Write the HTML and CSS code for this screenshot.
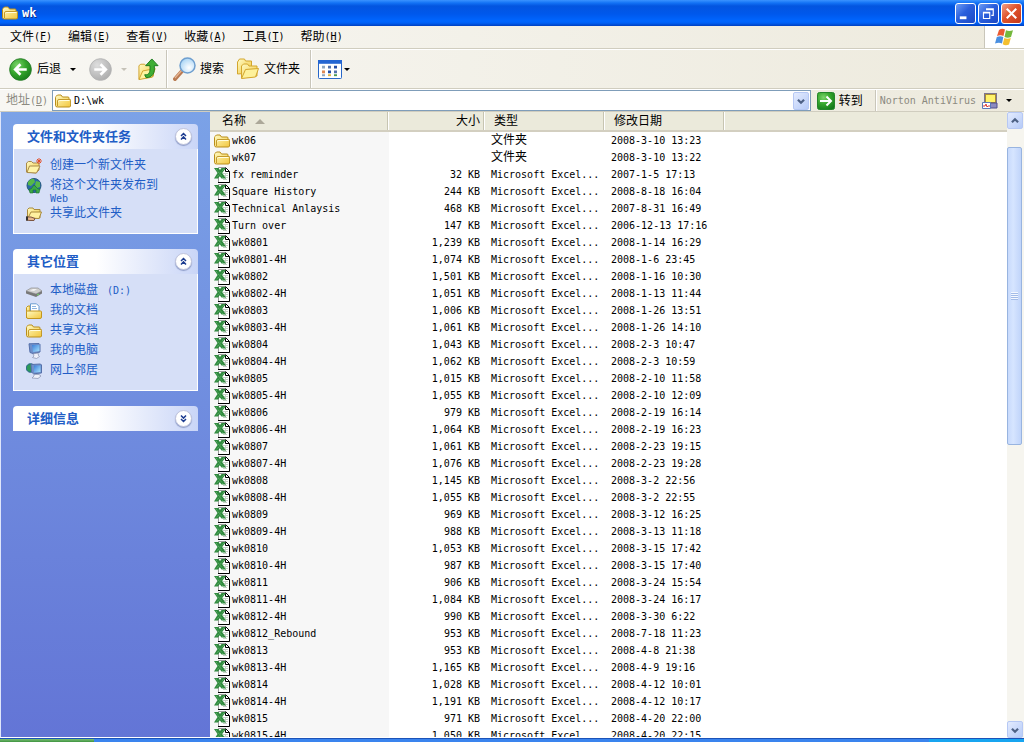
FILE: index.html
```html
<!DOCTYPE html>
<html lang="zh-CN">
<head>
<meta charset="utf-8">
<title>wk</title>
<link rel="stylesheet" href="styles.css">
</head>
<body>
<svg class="sprite" aria-hidden="true">
  <defs>
    <linearGradient id="gold" x1="0" y1="0" x2="1" y2="1"><stop offset="0" stop-color="#fffbc4"/><stop offset="1" stop-color="#f2c63c"/></linearGradient>
    <radialGradient id="green" cx=".35" cy=".3" r=".8"><stop offset="0" stop-color="#7bd46a"/><stop offset=".5" stop-color="#35a52c"/><stop offset="1" stop-color="#14791a"/></radialGradient>
    <radialGradient id="grey" cx=".35" cy=".3" r=".8"><stop offset="0" stop-color="#dedede"/><stop offset="1" stop-color="#a9a9a9"/></radialGradient>
    <radialGradient id="lens" cx=".6" cy=".65" r=".7"><stop offset="0" stop-color="#ffffff"/><stop offset="1" stop-color="#a5d3f5"/></radialGradient>
    <linearGradient id="screen" x1="0" y1="0" x2="1" y2="1"><stop offset="0" stop-color="#3c7fd8"/><stop offset="1" stop-color="#a8e4ff"/></linearGradient>
  </defs>
  <symbol id="folder" viewBox="0 0 16 16">
    <path d="M.5 12.500V4.500q0-1 1-1.500L2.500 2H6l1.500 2H13q1 0 1 1v1.500h1q.7 0 .7 1v4.500q0 2-1.500 2H2.500Q.5 14 .5 12.500z" fill="url(#gold)" stroke="#b98d1a"/>
    <path d="M2.500 13V8q0-1.500 1.500-1.500h11" fill="none" stroke="#c39a2c"/>
    <path d="M3.500 8.500q0-1 1-1h10" fill="none" stroke="#fffde0"/>
  </symbol>
  <symbol id="excel" viewBox="0 0 16 16">
    <path d="M4.500 .5h7l4 4v11h-11z" fill="#fff" stroke="#9b9b9b"/>
    <path d="M11.500 .5l4 4v11H4" fill="none" stroke="#000"/>
    <path d="M11.500 1v3.500H15" fill="none" stroke="#000"/>
    <path d="M9 6.500h5M9 8.500h5M9 10.500h5M9 12.500h4M11.500 6v7" stroke="#c3cfc4"/>
    <path d="M0 1h4.500l1.500 2L7.500 1H12L8.200 6l3.800 5.500H7.500L5.800 9.200 4 11.500H0l3.500-5.400z" fill="#2f8a3d"/>
    <path d="M2 2l7 9M10 2L2 11" stroke="#6fb678" stroke-dasharray="1 1" fill="none"/>
  </symbol>
</svg>

<header class="titlebar">
  <svg class="i16"><use href="#folder"/></svg>
  <h1>wk</h1>
  <div class="winbtns">
    <button aria-label="最小化"><svg viewBox="0 0 20 20"><path d="M4 13h7v3H4z" fill="#fff"/></svg></button>
    <button aria-label="还原"><svg viewBox="0 0 20 20"><path d="M8 6.500V5h7v7h-2M8 6h7" fill="none" stroke="#fff" stroke-width="1.200"/><path d="M4.700 8.700h6.600v6.600H4.700z M4.700 9.500h6.600" fill="none" stroke="#fff" stroke-width="1.200"/></svg></button>
    <button class="close" aria-label="关闭"><svg viewBox="0 0 20 20"><path d="M5 5l10 10M15 5L5 15" stroke="#fff" stroke-width="2.200"/></svg></button>
  </div>
</header>

<nav class="menubar">
  <button>文件<span class="l">(<u>F</u>)</span></button>
  <button>编辑<span class="l">(<u>E</u>)</span></button>
  <button>查看<span class="l">(<u>V</u>)</span></button>
  <button>收藏<span class="l">(<u>A</u>)</span></button>
  <button>工具<span class="l">(<u>T</u>)</span></button>
  <button>帮助<span class="l">(<u>H</u>)</span></button>
  <div class="flag">
    <svg viewBox="0 0 20 18"><path d="M4 2q3-2 6-.5L8.500 8Q5.500 6.500 2 8z" fill="#ea5a32"/><path d="M11 2.200q3 1.600 7 0L16 9q-3.500 1.500-6.500 0z" fill="#74b83c"/><path d="M1.800 9q3.500-1.500 6.500 0L7 15.500Q4 14 0 15.500z" fill="#4a8fe0"/><path d="M9.300 10q3 1.500 6.500 0L14 16.500q-3.500 1.500-6.300-.300z" fill="#f4bf2e"/></svg>
  </div>
</nav>

<div class="toolbar">
  <button class="back"><svg class="i23" viewBox="0 0 24 24"><circle cx="12" cy="12" r="11.300" fill="url(#green)" stroke="#2a7d2a"/><path d="M18.500 12H7M12 6.500L6.500 12l5.500 5.500" fill="none" stroke="#fff" stroke-width="2.800"/></svg>后退<i class="caret"></i></button>
  <button class="forward" aria-label="前进" disabled><svg class="i23" viewBox="0 0 24 24"><circle cx="12" cy="12" r="11.300" fill="url(#grey)" stroke="#b5b5b5"/><path d="M5.500 12H17M12 6.500l5.500 5.500-5.500 5.500" fill="none" stroke="#fff" stroke-width="2.800"/></svg><i class="caret dim"></i></button>
  <button class="up" aria-label="向上"><svg class="i23" viewBox="0 0 24 24"><path d="M2 8l2-1.500h4L9.500 8 17 7v12L2 22z" fill="url(#gold)" stroke="#d0a32e"/><path d="M2 22.500l4-9L19 11l-3 9z" fill="#fdf3a0" stroke="#d0a32e"/><path d="M8 17.500c5 .5 6-3 5.500-9.500H9l6.500-7L22 8h-4c1 8-2 12.500-8.500 12.500z" fill="#3fae35" stroke="#1d7a1e"/></svg></button>
  <span class="sep"></span>
  <button class="search"><svg class="i24" viewBox="0 0 24 24"><path d="M9.500 13.500L2 22" stroke="#b97a52" stroke-width="4" stroke-linecap="round"/><path d="M9 13L2 21" stroke="#e6b592" stroke-width="1.200"/><circle cx="14.500" cy="8.500" r="7.500" fill="url(#lens)" stroke="#6f9fcf" stroke-width="1.500"/></svg>搜索</button>
  <button class="folders"><svg class="i24" viewBox="0 0 24 24"><path d="M1.500 17V5l2-3h5l1 2h6v12z" fill="url(#gold)" stroke="#d3a62d"/><path d="M5.500 21V9l2-2h4l1.500 2H21v10z" fill="url(#gold)" stroke="#d3a62d"/><path d="M5.500 21.500l4-9 13-1-3 8.500z" fill="#fdf19b" stroke="#d3a62d"/></svg>文件夹</button>
  <span class="sep"></span>
  <button class="views" aria-label="查看方式"><svg class="i24" viewBox="0 0 24 20" preserveAspectRatio="none"><rect x=".5" y=".5" width="23" height="19" rx="1" fill="#fff" stroke="#2163c7"/><path d="M0 0h24v4H0z" fill="#2466d2"/><path d="M4 6h3v3H4zM4 15h3v2H4z" fill="#8fa7c0"/><path d="M4 11h3v3H4z" fill="#e08a55"/><path d="M10 6h3v3h-3zM16 11h3v3h-3z" fill="#5272ac"/><path d="M10 11h3v3h-3zM16 6h3v3h-3z" fill="#244da5"/><path d="M10 15h3v2h-3z" fill="#e0b33f"/><path d="M16 15h3v2h-3z" fill="#4c9a55"/></svg><i class="caret"></i></button>
</div>

<div class="addressbar">
  <label for="addr">地址<span class="l">(<u>D</u>)</span></label>
  <div class="combo">
    <svg class="i16"><use href="#folder"/></svg>
    <input id="addr" type="text" value="D:\wk">
    <button class="blue" aria-label="展开"><svg viewBox="0 0 16 16"><path d="M4.500 6.500L8 10l3.500-3.500" fill="none" stroke="#4d6185" stroke-width="2.500"/></svg></button>
  </div>
  <button class="go"><svg class="i18" viewBox="0 0 18 18"><rect x=".5" y=".5" width="17" height="17" rx="2" fill="url(#green)" stroke="#25862a"/><path d="M3 9h11M9.500 4.500L14 9l-4.500 4.500" fill="none" stroke="#fff" stroke-width="2"/></svg>转到</button>
  <span class="sep"></span>
  <button class="norton"><span class="l">Norton AntiVirus</span><svg class="i16" viewBox="0 0 16 16"><rect x="2.500" y=".5" width="12" height="10" fill="#a88b35" stroke="#7c7590"/><rect x="4" y="2" width="9" height="7" fill="#fff36b"/><path d="M8 10h7v5H8z" fill="#8b8bc0" stroke="#4e4e8c"/><path d="M.5 9.500h8v6h-8z" fill="#fff" stroke="#5b78b8"/><path d="M1 13h2l1-2 1 3 1-1h2" fill="none" stroke="#dc3c32"/></svg><i class="caret"></i></button>
</div>

<div class="content">
  <aside>
    <section>
      <h2>文件和文件夹任务<button aria-label="折叠"><svg viewBox="0 0 18 18"><path d="M6 8.500l3-3 3 3M6 12.500l3-3 3 3" fill="none" stroke="#1c3c90" stroke-width="1.800"/></svg></button></h2>
      <ul>
        <li><svg class="i16" viewBox="0 0 16 16"><path d="M.5 14V5l2-1.500h3L7 5h6v7l-3 3z" fill="url(#gold)" stroke="#a98a4a"/><path d="M1 14.500L3.500 8H14l-3.500 7z" fill="#fff4a8" stroke="#a98a4a"/><path d="M13 0v6M10 3h6M11 1l4 4M15 1l-4 4" stroke="#e3502a"/></svg><a href="#">创建一个新文件夹</a></li>
        <li><svg class="i16" viewBox="0 0 16 16"><circle cx="8" cy="7.500" r="7" fill="#2a69a8" stroke="#245a7c"/><path d="M2 4q3-4 6-3l1 3-4 4-3-1zM10 3l4 1v5l-3 1-2-3z" fill="#56b848"/><path d="M4 15l-1-4h2l3-4 4 4h2l-1 4h-3v-3H7v3z" fill="#3aa846" stroke="#19702a" stroke-width=".6"/></svg><a href="#">将这个文件夹发布到<span class="l second">Web</span></a></li>
        <li><svg class="i16" viewBox="0 0 16 16"><path d="M1.500 12V3.500L3 2h4l1 1.500h6V12z" fill="url(#gold)" stroke="#a88a3d"/><path d="M2 12l3-6h10.500L13 12.500z" fill="#fff0a0" stroke="#a88a3d"/><path d="M0 11h5l4 1.500-1 2H4L0 14z" fill="#e8b78d" stroke="#7c5540"/><path d="M0 10.500h2v4H0z" fill="#333"/></svg><a href="#">共享此文件夹</a></li>
      </ul>
    </section>
    <section>
      <h2>其它位置<button aria-label="折叠"><svg viewBox="0 0 18 18"><path d="M6 8.500l3-3 3 3M6 12.500l3-3 3 3" fill="none" stroke="#1c3c90" stroke-width="1.800"/></svg></button></h2>
      <ul>
        <li><svg class="i16" viewBox="0 0 16 16"><path d="M0 8l5-3h7l4 3-6 3z" fill="#cfcfcf" stroke="#8e8e8e" stroke-width=".7"/><path d="M0 8l10 3 6-3v2.500L10 14 0 10.500z" fill="#787878"/><path d="M4 7.500l3-1.500h4L8 8z" fill="#f3f3f3"/><path d="M11 12l2-1" stroke="#6fdc63"/></svg><a href="#">本地磁盘<span class="l">&nbsp;(D:)</span></a></li>
        <li><svg class="i16" viewBox="0 0 16 16"><path d="M.5 13V4.500L2 3h2v10z" fill="url(#gold)" stroke="#c2961f"/><path d="M4.500 9V.8h6l2.500 2.500V9z" fill="#fff" stroke="#6a9cd0"/><path d="M6 3.500h4M6 5.500h5" stroke="#8fb5e0"/><path d="M.5 15V9q0-1 1-1h13q1 0 1 1v5q0 1.500-1.500 1.500H2Q.5 15.500 .5 14z" fill="url(#gold)" stroke="#c2961f"/></svg><a href="#">我的文档</a></li>
        <li><svg class="i16"><use href="#folder"/></svg><a href="#">共享文档</a></li>
        <li><svg class="i16" viewBox="0 0 16 16"><path d="M3 .8L13 .5l1 1V9l-7 1.500-3-1z" fill="#6f8fca" stroke="#5570aa"/><path d="M6 2h7.500v6L7 9z" fill="url(#screen)"/><path d="M7 11l5-1 .5 2.500 1 1-3 2-4-1 1.500-1.500z" fill="#eef0fa" stroke="#858fae" stroke-width=".7"/></svg><a href="#">我的电脑</a></li>
        <li><svg class="i16" viewBox="0 0 16 16"><circle cx="4.500" cy="5" r="4.300" fill="#2c9a58" stroke="#28638d"/><path d="M5 1.500L14.500 1l1 1V10l-8 .8L5.500 9z" fill="#6f8fca" stroke="#5570aa"/><path d="M8 2.500h6.500V9L8 9.500z" fill="url(#screen)"/><path d="M8 11.500h5l2 1.500-3 2.500-6-.5 2-2z" fill="#eef0fa" stroke="#858fae" stroke-width=".7"/></svg><a href="#">网上邻居</a></li>
      </ul>
    </section>
    <section>
      <h2>详细信息<button aria-label="展开"><svg viewBox="0 0 18 18"><path d="M6 5.500l3 3 3-3M6 9.500l3 3 3-3" fill="none" stroke="#1c3c90" stroke-width="1.800"/></svg></button></h2>
    </section>
  </aside>
  <main>
    <table>
      <colgroup><col class="c-name"><col class="c-size"><col class="c-type"><col class="c-date"><col></colgroup>
      <thead><tr><th>名称<i class="sort"></i></th><th class="size">大小</th><th>类型</th><th>修改日期</th><th class="rest"></th></tr></thead>
      <tbody id="files"></tbody>
    </table>
  </main>
  <div class="scroll">
    <button class="blue" aria-label="向上滚动"><svg viewBox="0 0 16 16"><path d="M4.500 9.500L8 6l3.500 3.500" fill="none" stroke="#4d6185" stroke-width="2.500"/></svg></button>
    <div class="track"><div class="thumb"><span class="grip"></span></div></div>
    <button class="blue" aria-label="向下滚动"><svg viewBox="0 0 16 16"><path d="M4.500 6.500L8 10l3.500-3.500" fill="none" stroke="#4d6185" stroke-width="2.500"/></svg></button>
  </div>
</div>
<footer class="taskbar"><div class="start"></div><div class="tasks"></div><div class="tray"></div></footer>
<script src="files.js"></script>
</body>
</html>
```
FILE: styles.css
```css
* { box-sizing: border-box; }
body {
  margin: 0;
  height: 100vh;
  display: flex;
  flex-direction: column;
  overflow: hidden;
  background: #fff;
  color: #000;
  font: 12px/16px "Liberation Sans", "Noto Sans CJK SC", sans-serif;
}
button {
  margin: 0;
  padding: 0;
  border: 0;
  background: none;
  color: inherit;
  font: inherit;
  display: flex;
  align-items: center;
}
svg { display: block; flex: none; }
.sprite { position: absolute; width: 0; height: 0; }
.i16 { width: 16px; height: 16px; }
.i18 { width: 18px; height: 18px; }
.i23 { width: 23px; height: 23px; }
.i24 { width: 24px; height: 24px; }
.l { font-family: "DejaVu Sans Mono", monospace; font-size: 10px; }
.caret {
  border: 3px solid transparent;
  border-top-color: #000;
  border-bottom: 0;
}
.caret.dim { border-top-color: #c5c2b8; }
.sep {
  align-self: stretch;
  width: 2px;
  border-left: 1px solid #c9c6ba;
  border-right: 1px solid #fff;
}

.titlebar {
  flex: none;
  height: 26px;
  padding: 0 2px;
  display: flex;
  align-items: center;
  gap: 4px;
  background: linear-gradient(#3a93ff 0, #1272f5 3px, #0355e0 6px, #0058ec 14px, #0066ff 21px, #0060f5 23px, #0040c0 26px);
}
.titlebar h1 {
  flex: 1;
  margin: 0;
  color: #fff;
  font: bold 12px "DejaVu Sans Mono", monospace;
  text-shadow: 1px 1px #0a2f8c;
}
.winbtns { display: flex; gap: 2px; }
.winbtns button {
  width: 21px;
  height: 21px;
  border: 1px solid #fff;
  border-radius: 3px;
  background: linear-gradient(135deg, #6d9cf5, #2a5fdc 45%, #1c48c4);
}
.winbtns .close { background: linear-gradient(135deg, #f0a088, #e0532c 45%, #c4381a); }
.winbtns svg { width: 19px; height: 19px; }

.menubar, .toolbar, .addressbar {
  flex: none;
  display: flex;
  align-items: center;
  background: linear-gradient(90deg, #f8f7f3, #edeadd);
  border-bottom: 1px solid #d0cdbf;
}
.menubar { height: 23px; padding-left: 2px; }
.menubar button { padding: 0 8px; }
.flag {
  margin-left: auto;
  align-self: stretch;
  width: 40px;
  background: #fff;
  border-left: 1px solid #c9c6ba;
  display: flex;
  align-items: center;
  justify-content: center;
}
.flag svg { width: 20px; height: 18px; }

.toolbar {
  height: 40px;
  padding-left: 9px;
  border-top: 1px solid #fff;
}
.back .caret { margin-left: 9px; }
.back svg { margin-right: 5px; }
.forward { margin-left: 13px; gap: 9px; }
.up { margin: 0 6px 0 10px; }
.search { margin: 0 12px 0 5px; gap: 3px; }
.folders { margin-right: 10px; gap: 4px; }
.views { margin-left: 6px; gap: 2px; }
.views svg { height: 19px; }

.addressbar { height: 23px; padding-left: 6px; border-top: 1px solid #fff; }
.addressbar label { width: 46px; color: #8c8a80; }
.combo {
  flex: 1;
  height: 21px;
  padding: 0 1px 0 2px;
  border: 1px solid #7f9db9;
  background: #fff;
  display: flex;
  align-items: center;
}
.combo input {
  flex: 1;
  min-width: 0;
  padding: 0 3px;
  border: 0;
  outline: 0;
  background: none;
  font: 10px "DejaVu Sans Mono", monospace;
}
.blue {
  flex: none;
  border: 1px solid #b6c8f4;
  border-radius: 2px;
  background: linear-gradient(135deg, #e3ebfe, #b6cbf8);
  justify-content: center;
}
.blue svg { width: 14px; height: 14px; }
.combo .blue { width: 16px; height: 18px; }
.go { margin: 0 12px 0 6px; gap: 4px; }
.norton { margin: 0 12px 0 3px; color: #8c8a80; }
.norton svg { margin: 0 8px 0 6px; }

.content { flex: 1; min-height: 0; display: flex; }
aside {
  flex: none;
  width: 210px;
  padding: 12px 12px 0 12px;
  border-left: 1px solid #dfe6fa;
  border-bottom: 1px solid #fff;
  background: linear-gradient(#7ba2e7, #6375d6);
  display: flex;
  flex-direction: column;
  gap: 15px;
}
aside h2 {
  margin: 0;
  height: 25px;
  padding: 0 6px 0 14px;
  border-radius: 4px 4px 0 0;
  background: linear-gradient(90deg, #fff 45%, #c9d5f7);
  color: #215dc6;
  font-size: 13px;
  display: flex;
  align-items: center;
  justify-content: space-between;
}
aside h2 button {
  width: 17px;
  height: 17px;
  border: 1px solid #c0c4dc;
  border-radius: 50%;
  background: #fff;
  box-shadow: 0 1px 1px #8d9cc8;
}
aside h2 svg { width: 15px; height: 15px; }
aside ul {
  margin: 0;
  padding: 6px 0 10px 12px;
  border: 1px solid #fff;
  border-top: 0;
  background: #d6dff7;
  list-style: none;
}
aside li { display: flex; gap: 8px; height: 20px; line-height: 20px; }
aside li:has(.second) { height: 28px; }
aside li svg { margin-top: 3px; }
aside a { color: #215dc6; text-decoration: none; }
aside .second { display: block; line-height: 8px; }
aside a .l:not(.second) { margin-left: 3px; }

main {
  flex: 1;
  min-width: 0;
  overflow: hidden;
  border-bottom: 1px solid #fff;
}
table { width: 100%; table-layout: fixed; border-collapse: separate; border-spacing: 0; }
.c-name { width: 179px; }
.c-size { width: 96px; }
.c-type { width: 120px; }
.c-date { width: 120px; }
th {
  height: 20px;
  padding: 0 9px;
  border-bottom: 2px solid #d3cfc0;
  background: linear-gradient(90deg, #ebeadb calc(100% - 2px), #c7c5b2 calc(100% - 2px), #c7c5b2 calc(100% - 1px), #fff calc(100% - 1px));
  font-weight: normal;
  text-align: left;
  line-height: 18px;
}
th:first-child { padding-left: 12px; }
th.rest { background: #ebeadb; }
th.size { text-align: right; padding: 0 5px; }
.sort {
  display: inline-block;
  margin-left: 9px;
  border: 5px solid transparent;
  border-top: 0;
  border-bottom-color: #aca899;
  vertical-align: 1px;
}
td {
  height: 17px;
  padding: 0 6px;
  font: 10px/17px "DejaVu Sans Mono", monospace;
  white-space: nowrap;
}
td:first-child { padding: 0 0 0 4px; background: #f7f7f7; }
td.size { text-align: right; padding: 0 5px; }
td.cjk { font: 12px/17px "Liberation Sans", "Noto Sans CJK SC", sans-serif; }
.file { display: flex; align-items: center; gap: 2px; height: 17px; }

.scroll {
  flex: none;
  width: 17px;
  background: #f6f5ef;
  display: flex;
  flex-direction: column;
}
.scroll .blue { width: 16px; height: 17px; }
.track { flex: 1; padding-top: 18px; }
.thumb {
  width: 15px;
  height: 52%;
  border: 1px solid #98b4e0;
  border-radius: 2px;
  background: linear-gradient(90deg, #c8dafc, #d6e5ff 40%, #c0d4fa);
  display: flex;
  align-items: center;
  justify-content: center;
}
.grip {
  width: 7px;
  height: 8px;
  background: repeating-linear-gradient(#f4f8ff 0, #f4f8ff 1px, #a3bce8 1px, #a3bce8 2px);
}

.taskbar { flex: none; height: 4px; display: flex; }
.taskbar div { border-top: 1px solid #1c53b8; }
.start { width: 94px; background: linear-gradient(#7bbf74, #3f9440); }
.tasks { flex: 1; background: #3a84ee; }
.tray { width: 95px; background: #18a5f0; }
```
FILE: files.js
```javascript
const files = [
  ["wk06", "", "2008-3-10 13:23"],
  ["wk07", "", "2008-3-10 13:22"],
  ["fx reminder", "32", "2007-1-5 17:13"],
  ["Square History", "244", "2008-8-18 16:04"],
  ["Technical Anlaysis", "468", "2007-8-31 16:49"],
  ["Turn over", "147", "2006-12-13 17:16"],
  ["wk0801", "1,239", "2008-1-14 16:29"],
  ["wk0801-4H", "1,074", "2008-1-6 23:45"],
  ["wk0802", "1,501", "2008-1-16 10:30"],
  ["wk0802-4H", "1,051", "2008-1-13 11:44"],
  ["wk0803", "1,006", "2008-1-26 13:51"],
  ["wk0803-4H", "1,061", "2008-1-26 14:10"],
  ["wk0804", "1,043", "2008-2-3 10:47"],
  ["wk0804-4H", "1,062", "2008-2-3 10:59"],
  ["wk0805", "1,015", "2008-2-10 11:58"],
  ["wk0805-4H", "1,055", "2008-2-10 12:09"],
  ["wk0806", "979", "2008-2-19 16:14"],
  ["wk0806-4H", "1,064", "2008-2-19 16:23"],
  ["wk0807", "1,061", "2008-2-23 19:15"],
  ["wk0807-4H", "1,076", "2008-2-23 19:28"],
  ["wk0808", "1,145", "2008-3-2 22:56"],
  ["wk0808-4H", "1,055", "2008-3-2 22:55"],
  ["wk0809", "969", "2008-3-12 16:25"],
  ["wk0809-4H", "988", "2008-3-13 11:18"],
  ["wk0810", "1,053", "2008-3-15 17:42"],
  ["wk0810-4H", "987", "2008-3-15 17:40"],
  ["wk0811", "906", "2008-3-24 15:54"],
  ["wk0811-4H", "1,084", "2008-3-24 16:17"],
  ["wk0812-4H", "990", "2008-3-30 6:22"],
  ["wk0812_Rebound", "953", "2008-7-18 11:23"],
  ["wk0813", "953", "2008-4-8 21:38"],
  ["wk0813-4H", "1,165", "2008-4-9 19:16"],
  ["wk0814", "1,028", "2008-4-12 10:01"],
  ["wk0814-4H", "1,191", "2008-4-12 10:17"],
  ["wk0815", "971", "2008-4-20 22:00"],
  ["wk0815-4H", "1,050", "2008-4-20 22:15"]
];
document.getElementById("files").innerHTML = files.map(([name, size, date]) =>
  `<tr><td><span class="file"><svg class="i16"><use href="#${size ? "excel" : "folder"}"/></svg>${name}</span></td>` +
  `<td class="size">${size ? size + " KB" : ""}</td>` +
  (size ? "<td>Microsoft Excel...</td>" : '<td class="cjk">文件夹</td>') +
  `<td>${date}</td><td></td></tr>`).join("");
```
